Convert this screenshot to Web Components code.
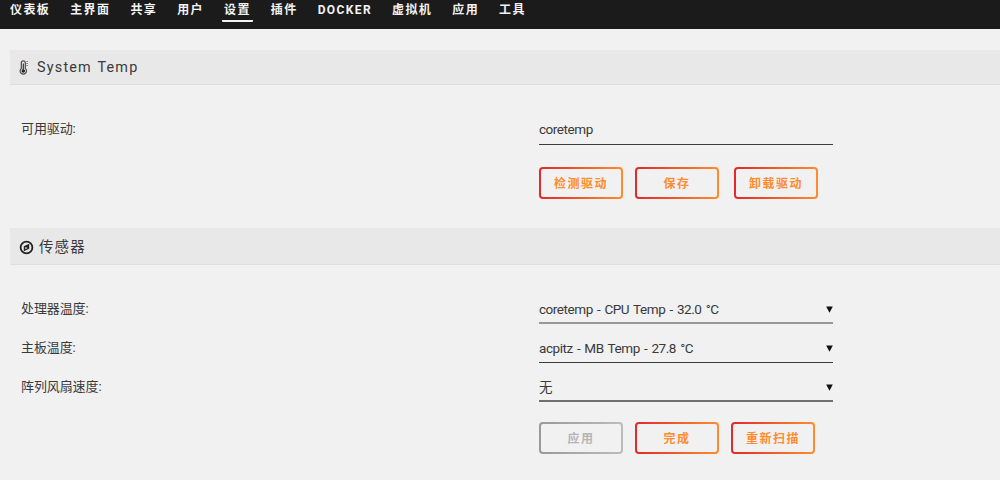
<!DOCTYPE html>
<html lang="zh-CN">
<head>
<meta charset="utf-8">
<title>System Temp</title>
<style>
html, body{
    margin: 0;
    padding: 0;
}
body{
    width: 1000px;
    height: 480px;
    overflow: hidden;
    background: #f1f1f1;
    color: #3a3a3a;
    font-family: Roboto, "Noto Sans CJK SC", sans-serif;
    font-size: 13px;
}
</style>
</head>
<body>
<temp-page></temp-page>

<script>
function makeTemplate(html) {
    const template = document.createElement("template");
    template.innerHTML = html;
    return template;
}

class BaseElement extends HTMLElement {
    constructor() {
        super();
        this.attachShadow({ mode: "open" });
        this.shadowRoot.appendChild(this.constructor.template.content.cloneNode(true));
    }
}

class NavItem extends BaseElement {
    static template = makeTemplate(`
<style>
:host{
    display: block;
    height: 20px;
    padding: 0 2px;
    line-height: 20px;
    border-bottom: 2px solid transparent;
    box-sizing: content-box;
    white-space: nowrap;
}
:host([active]){
    border-bottom-color: #f2f2f2;
    border-radius: 1px;
}
</style>
<slot></slot>`);
}

class NavBar extends BaseElement {
    static template = makeTemplate(`
<style>
:host{
    display: flex;
    gap: 16px;
    height: 29px;
    padding-left: 8px;
    background: #1b1b1b;
    color: #f2f2f2;
    font-size: 12px;
    font-weight: 700;
    letter-spacing: 1.4px;
    box-sizing: border-box;
}
</style>
<slot></slot>`);
}

class SectionTitle extends BaseElement {
    static template = makeTemplate(`
<style>
:host{
    display: flex;
    align-items: center;
    height: 35px;
    margin-left: 10px;
    padding-left: 9px;
    background: #e8e8e8;
    border-bottom: 1px solid #dedede;
    box-sizing: border-box;
    font-size: 14.4px;
    letter-spacing: 1.2px;
    word-spacing: 1px;
}
::slotted(svg){
    display: block;
    flex: none;
}
</style>
<slot name="icon"></slot>
<slot></slot>`);
}

class FormRow extends BaseElement {
    static template = makeTemplate(`
<style>
:host{
    display: grid;
    grid-template-columns: 518px 294px;
    height: 39px;
    padding-left: 21px;
}
.label{
    line-height: 28px;
    letter-spacing: -0.1px;
}
</style>
<div class="label"><slot name="label"></slot></div>
<div><slot></slot></div>`);
}

class FieldBox extends BaseElement {
    static template = makeTemplate(`
<style>
:host{
    display: flex;
    justify-content: space-between;
    height: 29px;
    box-sizing: border-box;
    line-height: 29px;
    border-bottom: 1px solid #3c3c3c;
    font-size: 13.5px;
    letter-spacing: -0.45px;
    word-spacing: 1.3px;
}
:host(:not([select])){
    line-height: 27px;
}
:host([line="light"]){
    border-bottom: 2px solid #999;
}
:host([line="thick"]){
    border-bottom: 2px solid #707070;
}
svg{
    display: none;
    margin: 11px 0 0;
}
:host([select]) svg{
    display: block;
}
</style>
<span><slot></slot></span>
<svg width="7" height="7" viewBox="0 0 7 7"><path d="M0.2 0.5H6.8L3.5 6.8Z" fill="#111"/></svg>`);
}

class ActionButton extends BaseElement {
    static template = makeTemplate(`
<style>
:host{
    display: block;
    width: 84px;
    height: 32px;
    box-sizing: border-box;
    border: 2px solid transparent;
    border-radius: 4px;
    background: linear-gradient(#f1f1f1, #f1f1f1) padding-box,
        linear-gradient(90deg, #e22828, #ff8c2f) border-box;
    color: #ff8c2f;
    font-size: 12px;
    font-weight: 700;
    letter-spacing: 1.5px;
    line-height: 30px;
    text-align: center;
    white-space: nowrap;
}
:host([disabled]){
    background: linear-gradient(#f1f1f1, #f1f1f1) padding-box,
        linear-gradient(90deg, #999, #bcbcbc) border-box;
    color: #b5b5b5;
}
</style>
<slot></slot>`);
}

class ButtonRow extends BaseElement {
    static template = makeTemplate(`
<style>
:host{
    display: flex;
    gap: 12px;
    padding-left: 539px;
}
</style>
<slot></slot>`);
}

class TempPage extends BaseElement {
    static template = makeTemplate(`
<style>
:host{
    display: block;
}
.first{
    margin-top: 21px;
}
.driver{
    margin-top: 31px;
    height: 51px;
}
.driver [slot="label"]{
    display: block;
    line-height: 26px;
}
.second{
    height: 37px;
    margin-top: 29px;
    padding-bottom: 2px;
}
.sensors{
    margin-top: 30px;
    padding-bottom: 10px;
}
.wide{
    margin-left: 3px;
}
.first svg{
    margin-right: 8px;
}
.second svg{
    margin: 4px 5px 0 0;
}
</style>
<nav-bar>
    <nav-item>仪表板</nav-item>
    <nav-item>主界面</nav-item>
    <nav-item>共享</nav-item>
    <nav-item>用户</nav-item>
    <nav-item active>设置</nav-item>
    <nav-item>插件</nav-item>
    <nav-item>DOCKER</nav-item>
    <nav-item>虚拟机</nav-item>
    <nav-item>应用</nav-item>
    <nav-item>工具</nav-item>
</nav-bar>

<section-title class="first">
    <svg slot="icon" width="10" height="15" viewBox="0 0 10 15">
        <path d="M2.3 8.5V2.8a2 2 0 0 1 4 0v5.7a3.2 3.2 0 1 1-4 0Z" fill="none" stroke="#4a4a4a" stroke-width="1.2"/>
        <circle cx="4.3" cy="11" r="1.8" fill="#222"/>
        <path d="M4.3 3.5V11" stroke="#333" stroke-width="1.2"/>
        <path d="M7.3 1.5H9M7.3 3.5H9M7.3 5.5H9" stroke="#a08560" stroke-width="1"/>
    </svg>
    System Temp
</section-title>

<form-row class="driver">
    <span slot="label">可用驱动:</span>
    <field-box>coretemp</field-box>
</form-row>
<button-row>
    <action-button>检测驱动</action-button>
    <action-button>保存</action-button>
    <action-button class="wide">卸载驱动</action-button>
</button-row>

<section-title class="second">
    <svg slot="icon" width="15" height="15" viewBox="0 0 15 15">
        <circle cx="7.5" cy="7.5" r="5.9" fill="none" stroke="#222" stroke-width="1.8"/>
        <path d="M10.2 3.8V8.8L4.8 11.2V6.2Z" fill="#222"/>
        <path d="M6.3 7.1V9.3L8.6 8.1Z" fill="#e8e8e8"/>
    </svg>
    传感器
</section-title>

<div class="sensors">
    <form-row>
        <span slot="label">处理器温度:</span>
        <field-box select line="light">coretemp - CPU Temp - 32.0 °C</field-box>
    </form-row>
    <form-row>
        <span slot="label">主板温度:</span>
        <field-box select>acpitz - MB Temp - 27.8 °C</field-box>
    </form-row>
    <form-row>
        <span slot="label">阵列风扇速度:</span>
        <field-box select line="thick">无</field-box>
    </form-row>
</div>
<button-row>
    <action-button disabled>应用</action-button>
    <action-button>完成</action-button>
    <action-button>重新扫描</action-button>
</button-row>`);
}

customElements.define("nav-item", NavItem);
customElements.define("nav-bar", NavBar);
customElements.define("section-title", SectionTitle);
customElements.define("form-row", FormRow);
customElements.define("field-box", FieldBox);
customElements.define("action-button", ActionButton);
customElements.define("button-row", ButtonRow);
customElements.define("temp-page", TempPage);
</script>
</body>
</html>
